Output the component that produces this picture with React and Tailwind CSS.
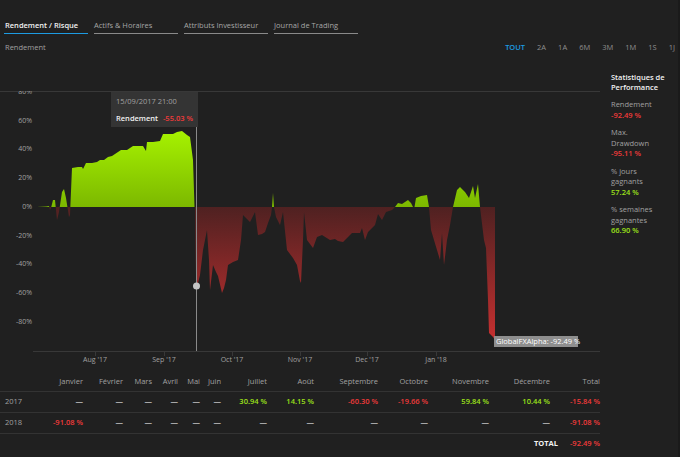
import React from "react";

const RAW = [
  [37,207],[46,206.5],[49,206],[50,210],[51,208],[53,200],[55,200],[57,220],[59,212],[62,192],[64,189],[66,198],[69,217],[70,215],[72,168],[78,167],[82,167],[83,169],[86,163],[92,163],[97,162],[100,160],[104,160],[108,157],[112,156],[115,154],[118,152],[121,150],[127,150],[133,146],[143,146],[146,151],[147,142],[153,142],[160,141],[163,134],[173,134],[177,132],[182,131],[187,135],[190,137],[193,160],[194.5,207],
  [195,207],[196,275],[197,287],[200,275],[203,250],[207,230],[209,260],[210,290],[213,265],[216,272],[218,276],[222,293],[224,288],[226,280],[228,265],[233,262],[238,260],[241,240],[243,215],[247,219],[250,222],[255,212],[258,235],[262,234],[265,232],[268,223],[271,215],[272,207],[273,193],[274,207],[276,217],[280,225],[283,212],[287,250],[293,258],[297,265],[300,281],[301,283],[303,240],[304,212],[307,240],[313,248],[317,237],[322,235],[330,240],[335,239],[338,241],[343,242],[350,235],[352,233],[360,233],[362,228],[365,240],[368,232],[375,225],[378,214],[382,220],[386,212],[392,210],[395,207],
  [398,203],[402,204],[408,200],[411,203],[413,207],[414.5,207],[416,198],[421,196],[427,195],[429,207],
  [431,230],[440,260],[442,233],[444,265],[447,240],[450,225],[453,207],
  [457,190],[460,187],[465,192],[469,198],[473,186],[475,198],[478,184],[480,207],
  [484,240],[486,248],[488,300],[489,333],[493,337],[495,340],[495,207]
];

const TOP = 91;
const ZERO = 207 - TOP;
const pts = RAW.map(([x, y]) => [x, y - TOP]);
const areaPath =
  `M${pts[0][0]},${ZERO} ` +
  pts.map(([x, y]) => `L${x},${y}`).join(" ") +
  ` L${pts[pts.length - 1][0]},${ZERO} Z`;

const yLabels = [
  ["80%", 80], ["60%", 60], ["40%", 40], ["20%", 20], ["0%", 0],
  ["-20%", -20], ["-40%", -40], ["-60%", -60], ["-80%", -80],
];
const xLabels = [
  ["Aug '17", 95], ["Sep '17", 164], ["Oct '17", 232], ["Nov '17", 300],
  ["Dec '17", 367], ["Jan '18", 436],
];

const COLS = "grid grid-cols-[40px_43px_40px_29px_26px_22px_21px_46px_47px_64px_50px_61px_61px_50px] w-[600px]";

const headers = ["", "Janvier", "Février", "Mars", "Avril", "Mai", "Juin", "Juillet", "Août", "Septembre", "Octobre", "Novembre", "Décembre", "Total"];

const R = "r";
const G = "g";
const rows = [
  ["2017", ["—","—","—","—","—","—",[G,"30.94 %"],[G,"14.15 %"],[R,"-60.30 %"],[R,"-19.66 %"],[G,"59.84 %"],[G,"10.44 %"],[R,"-15.84 %"]]],
  ["2018", [[R,"-91.08 %"],"—","—","—","—","—","—","—","—","—","—","—",[R,"-91.08 %"]]],
];

function Cell({ v }) {
  if (typeof v === "string") {
    return <div className="text-right text-[#d4d4d4] font-semibold">{v}</div>;
  }
  const [c, t] = v;
  return (
    <div className={c === R ? "text-right text-[#ef3a3a] font-semibold" : "text-right text-[#9ce01a] font-semibold"}>
      {t}
    </div>
  );
}

function Chart() {
  return (
    <div className="relative h-[281px] w-[600px]">
      <svg width="600" height="281" viewBox="0 0 600 281" className="block">
        <defs>
          <linearGradient id="gG" gradientUnits="userSpaceOnUse" x1="0" y1="40" x2="0" y2={ZERO}>
            <stop offset="0" stopColor="#a6f200" />
            <stop offset="1" stopColor="#7cb800" />
          </linearGradient>
          <linearGradient id="gR" gradientUnits="userSpaceOnUse" x1="0" y1={ZERO} x2="0" y2="249">
            <stop offset="0" stopColor="#4f2121" />
            <stop offset="1" stopColor="#c63030" />
          </linearGradient>
          <clipPath id="cTop"><rect x="0" y="0" width="600" height={ZERO} /></clipPath>
          <clipPath id="cBot"><rect x="0" y={ZERO} width="600" height={281 - ZERO} /></clipPath>
        </defs>
        <line x1="0" y1="0.5" x2="600" y2="0.5" stroke="#383838" strokeWidth="1" />
        <line x1="33" y1="260.5" x2="600" y2="260.5" stroke="#383838" strokeWidth="1" />
        {xLabels.map(([t, x]) => (
          <line key={t} x1={x + 0.5} y1="260" x2={x + 0.5} y2="265" stroke="#383838" strokeWidth="1" />
        ))}
        <path d={areaPath} fill="url(#gG)" clipPath="url(#cTop)" />
        <path d={areaPath} fill="url(#gR)" clipPath="url(#cBot)" />
        {yLabels.map(([t, v]) => (
          <text key={t} x="32" y={ZERO - v * 1.435} textAnchor="end" dominantBaseline="middle"
            fontSize="7" fill="#a0a0a0" fontFamily="'Open Sans', sans-serif">{t}</text>
        ))}
        {xLabels.map(([t, x]) => (
          <text key={t} x={x} y="269" textAnchor="middle" dominantBaseline="middle"
            fontSize="7" fill="#a0a0a0" fontFamily="'Open Sans', sans-serif">{t}</text>
        ))}
        <line x1="196.5" y1="1" x2="196.5" y2="260" stroke="#8a8a8a" strokeWidth="1" />
        <circle cx="196.5" cy={286 - TOP} r="3.5" fill="#c4c4c4" />
        <rect x="494" y={336 - TOP} width="84" height="11" fill="#8e8e8e" />
        <text x="496" y={341.5 - TOP} dominantBaseline="middle" fontSize="7.5" fill="#ffffff"
          fontFamily="'Open Sans', sans-serif">GlobalFXAlpha: -92.49 %</text>
      </svg>
      <div className="absolute left-[111px] top-[1px] w-[87px] h-[35px] bg-[#343434] px-[5px] pt-[4px]">
        <div className="leading-[10px] text-[#a0a0a0]">15/09/2017 21:00</div>
        <div className="flex justify-between leading-[10px] mt-[7px]">
          <span className="text-[#f0f0f0] font-semibold">Rendement</span>
          <span className="text-[#ef3a3a] font-semibold">-55.03 %</span>
        </div>
      </div>
    </div>
  );
}

export default function App() {
  const tabs = ["Rendement / Risque", "Actifs & Horaires", "Attributs Investisseur", "Journal de Trading"];
  const ranges = ["TOUT", "2A", "1A", "6M", "3M", "1M", "1S", "1J"];
  return (
    <div className="w-[680px] h-[457px] overflow-hidden bg-[#202020] border-r-2 border-[#1a1a1a] font-['Open_Sans',sans-serif] text-[7.5px] text-[#a0a0a0]">
      <div className="flex gap-[6px] pl-[4px] pt-[20px]">
        {tabs.map((t, i) => (
          <div
            key={t}
            className={
              i === 0
                ? "w-[84px] pl-[1px] pb-[2px] leading-[11px] border-b-[1.5px] border-[#1d9be2] text-[#f2f2f2] font-semibold"
                : "w-[84px] pb-[2px] leading-[11px] border-b border-[#8a8a8a] text-[#a6a6a6]"
            }
          >
            {t}
          </div>
        ))}
      </div>
      <div className="flex justify-between items-center mt-[8px] pl-[5px] pr-[3px] leading-[11px]">
        <span>Rendement</span>
        <div className="flex gap-[12px]">
          {ranges.map((r, i) => (
            <span key={r} className={i === 0 ? "text-[#1d9be2] font-semibold" : "text-[#8e8e8e]"}>{r}</span>
          ))}
        </div>
      </div>
      <div className="flex">
        <div className="w-[600px] pt-[38px]">
          <Chart />
        </div>
        <div className="pl-[11px] pt-[19px] w-[65px]">
          <div className="text-[#f2f2f2] font-semibold leading-[10px] w-[56px]">Statistiques de Performance</div>
          <div className="mt-[7px] leading-[10.5px] w-[54px]">
            <div>Rendement</div>
            <div className="text-[#ef3a3a] font-semibold">-92.49 %</div>
          </div>
          <div className="mt-[7px] leading-[10.5px] w-[54px]">
            <div>Max. Drawdown</div>
            <div className="text-[#ef3a3a] font-semibold">-95.11 %</div>
          </div>
          <div className="mt-[7px] leading-[10.5px] w-[54px]">
            <div>% jours gagnants</div>
            <div className="text-[#9ce01a] font-semibold">57.24 %</div>
          </div>
          <div className="mt-[7px] leading-[10.5px] w-[54px]">
            <div>% semaines gagnantes</div>
            <div className="text-[#9ce01a] font-semibold">66.90 %</div>
          </div>
        </div>
      </div>
      <div className="w-[600px]">
        <div className={COLS + " h-[19px] items-center"}>
          {headers.map((h, i) => (
            <div key={i} className="text-right text-[#a0a0a0]">{h}</div>
          ))}
        </div>
        {rows.map(([y, cells]) => (
          <div key={y} className={COLS + " h-[21px] items-center border-t border-[#333333]"}>
            <div className="pl-[5px] text-[#a0a0a0]">{y}</div>
            {cells.map((c, i) => <Cell key={i} v={c} />)}
          </div>
        ))}
        <div className="flex justify-end items-center h-[21px] border-t border-[#333333]">
          <span className="text-[#f2f2f2] font-bold">TOTAL</span>
          <span className="w-[42px] text-right text-[#ef3a3a] font-semibold">-92.49 %</span>
        </div>
      </div>
    </div>
  );
}
